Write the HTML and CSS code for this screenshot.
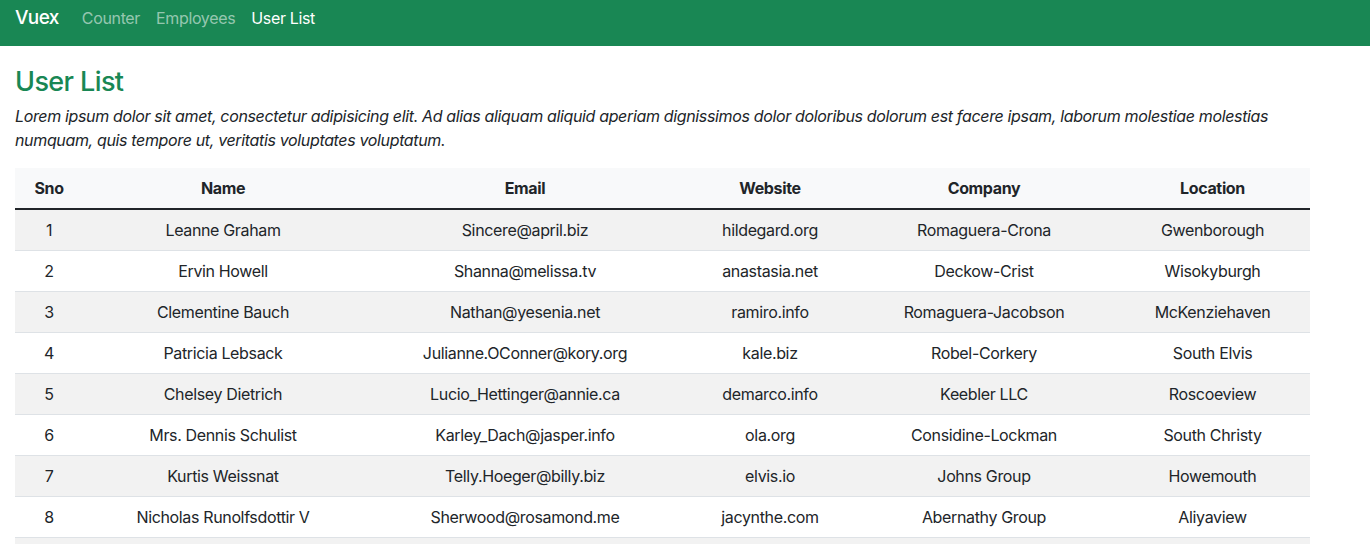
FILE: index.html
```html
<!DOCTYPE html>
<html lang="en">
<head>
<meta charset="utf-8">
<title>Vuex - User List</title>
<link rel="stylesheet" href="styles.css">
</head>
<body>
<nav class="navbar">
  <a class="brand" href="#">Vuex</a>
  <ul class="nav-links">
    <li><a class="nav-link" href="#">Counter</a></li>
    <li><a class="nav-link" href="#">Employees</a></li>
    <li><a class="nav-link active" href="#">User List</a></li>
  </ul>
</nav>
<main class="content">
  <h3 class="title">User List</h3>
  <p class="intro">Lorem ipsum dolor sit amet, consectetur adipisicing elit. Ad alias aliquam aliquid aperiam dignissimos dolor doloribus dolorum est facere ipsam, laborum molestiae molestias numquam, quis tempore ut, veritatis voluptates voluptatum.</p>
  <table class="users">
    <colgroup>
      <col class="c-sno"><col class="c-name"><col class="c-email"><col class="c-web"><col class="c-comp"><col class="c-loc">
    </colgroup>
    <thead>
      <tr><th>Sno</th><th>Name</th><th>Email</th><th>Website</th><th>Company</th><th>Location</th></tr>
    </thead>
    <tbody>
      <tr><td>1</td><td>Leanne Graham</td><td>Sincere@april.biz</td><td>hildegard.org</td><td>Romaguera-Crona</td><td>Gwenborough</td></tr>
      <tr><td>2</td><td>Ervin Howell</td><td>Shanna@melissa.tv</td><td>anastasia.net</td><td>Deckow-Crist</td><td>Wisokyburgh</td></tr>
      <tr><td>3</td><td>Clementine Bauch</td><td>Nathan@yesenia.net</td><td>ramiro.info</td><td>Romaguera-Jacobson</td><td>McKenziehaven</td></tr>
      <tr><td>4</td><td>Patricia Lebsack</td><td>Julianne.OConner@kory.org</td><td>kale.biz</td><td>Robel-Corkery</td><td>South Elvis</td></tr>
      <tr><td>5</td><td>Chelsey Dietrich</td><td>Lucio_Hettinger@annie.ca</td><td>demarco.info</td><td>Keebler LLC</td><td>Roscoeview</td></tr>
      <tr><td>6</td><td>Mrs. Dennis Schulist</td><td>Karley_Dach@jasper.info</td><td>ola.org</td><td>Considine-Lockman</td><td>South Christy</td></tr>
      <tr><td>7</td><td>Kurtis Weissnat</td><td>Telly.Hoeger@billy.biz</td><td>elvis.io</td><td>Johns Group</td><td>Howemouth</td></tr>
      <tr><td>8</td><td>Nicholas Runolfsdottir V</td><td>Sherwood@rosamond.me</td><td>jacynthe.com</td><td>Abernathy Group</td><td>Aliyaview</td></tr>
      <tr><td>9</td><td>Glenna Reichert</td><td>Chaim_McDermott@dana.io</td><td>conrad.com</td><td>Yost and Sons</td><td>Bartholomebury</td></tr>
      <tr><td>10</td><td>Clementina DuBuque</td><td>Rey.Padberg@karina.biz</td><td>ambrose.net</td><td>Hoeger LLC</td><td>Lebsackbury</td></tr>
    </tbody>
  </table>
</main>
</body>
</html>
```

FILE: styles.css
```css
* { box-sizing: border-box; }

body {
  margin: 0;
  font-family: Inter, "Noto Sans", "Liberation Sans", sans-serif;
  font-size: 16px;
  line-height: 1.5;
  letter-spacing: -0.35px;
  color: #212529;
  background: #fff;
}

.navbar {
  display: flex;
  align-items: center;
  background: #198754;
  padding: 3px 15px 13px;
  height: 46px;
}

.brand {
  font-size: 19px;
  font-weight: 500;
  line-height: 30px;
  color: #fff;
  text-decoration: none;
  margin-right: 23px;
  letter-spacing: -0.6px;
}

.nav-links {
  display: flex;
  gap: 16px;
  list-style: none;
  margin: 0;
  padding: 0;
}

.nav-link {
  color: rgba(255, 255, 255, 0.55);
  text-decoration: none;
  font-size: 16px;
  line-height: 30px;
}

.nav-link.active { color: #fff; }

.content {
  padding: 0 15px;
}

.title {
  margin: 20px 0 6px;
  font-size: 27px;
  font-weight: 500;
  line-height: 1.2;
  letter-spacing: -0.6px;
  color: #198754;
}

.intro {
  margin: 0 0 16px;
  font-style: italic;
  width: 1300px;
}

.users {
  width: 1295px;
  border-collapse: collapse;
  table-layout: fixed;
}

.c-sno { width: 68px; }
.c-name { width: 280px; }
.c-email { width: 324px; }
.c-web { width: 166px; }
.c-comp { width: 262px; }
.c-loc { width: 195px; }

.users th,
.users td {
  text-align: center;
  padding: 8px;
  border-bottom: 1px solid #dee2e6;
  white-space: nowrap;
}

.users thead th {
  background: #f8f9fa;
  font-weight: 700;
  border-bottom: 2px solid #212529;
}

.users tbody tr:nth-child(odd) td {
  background: #f2f2f2;
}
```
